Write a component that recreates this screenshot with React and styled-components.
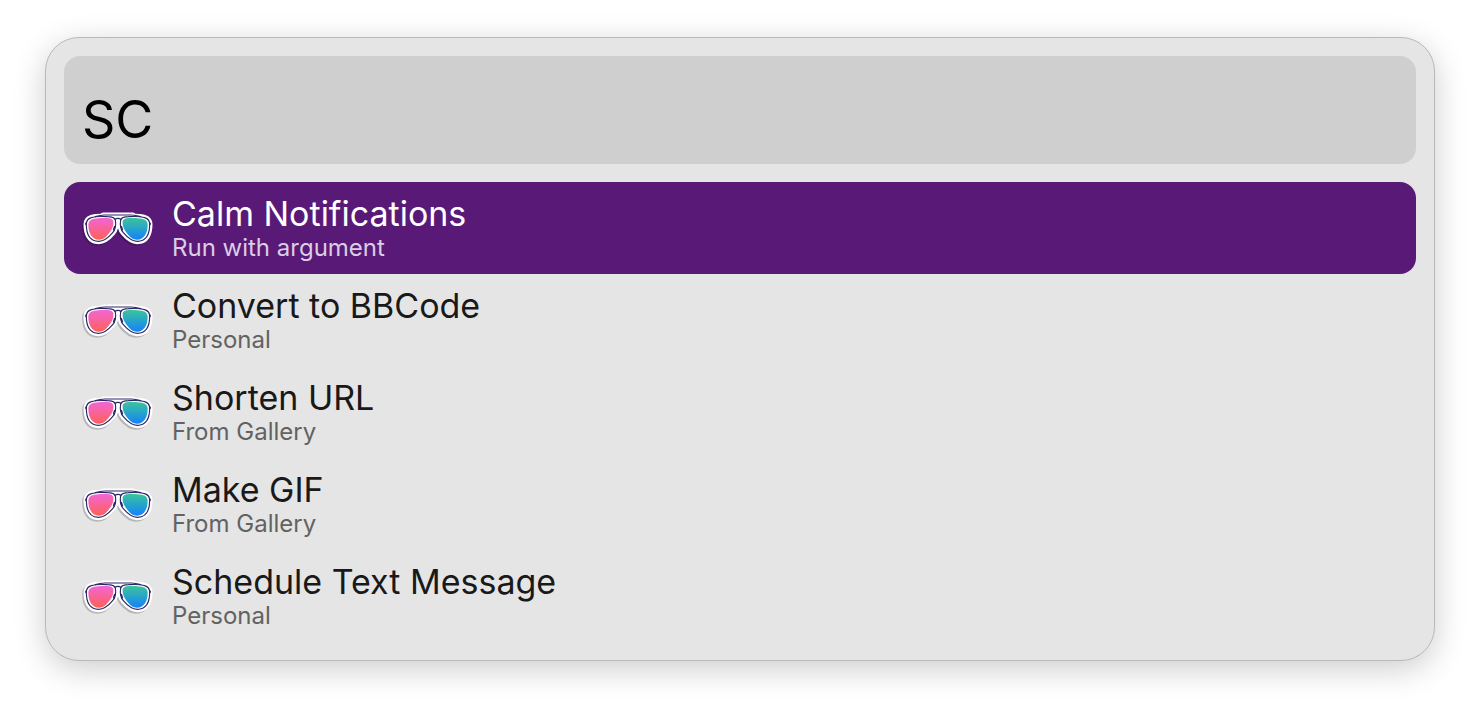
import React, { useState } from "react";
import styled, { createGlobalStyle } from "styled-components";

const GlobalStyle = createGlobalStyle`
  * { box-sizing: border-box; }
  body {
    margin: 0;
    background: #fff;
    font-family: Inter, "Liberation Sans", sans-serif;
  }
`;

const Page = styled.main`
  padding: 37px 45px 53px;
`;

const Panel = styled.section`
  display: flex;
  flex-direction: column;
  gap: 18px;
  padding: 18px;
  border: 1px solid #b9b9b9;
  border-radius: 34px;
  background: #e5e5e5;
  box-shadow: 0 8px 32px rgba(0, 0, 0, 0.2);
`;

const SearchInput = styled.input`
  width: 100%;
  height: 108px;
  padding: 18px 18px 0;
  border: 0;
  border-radius: 16px;
  outline: 0;
  background: #cfcfcf;
  color: #000;
  font: inherit;
  font-size: 52px;
`;

const Results = styled.ul`
  margin: 0;
  padding: 0;
  list-style: none;
`;

const Row = styled.button`
  display: flex;
  align-items: center;
  gap: 18px;
  width: 100%;
  height: 92px;
  padding: 0 18px;
  border: 0;
  border-radius: 16px;
  background: ${(p) => (p.$selected ? "#591a77" : "transparent")};
  color: ${(p) => (p.$selected ? "#fff" : "#191919")};
  font: inherit;
  text-align: left;
`;

const Labels = styled.span`
  display: flex;
  flex-direction: column;
  padding-bottom: 1px;
`;

const Title = styled.span`
  font-size: 34px;
  line-height: 41px;
`;

const Subtitle = styled.span`
  color: ${(p) => (p.$selected ? "#dccde3" : "#626262")};
  font-size: 24px;
  line-height: 28px;
`;

const IconSvg = styled.svg`
  flex: none;
  width: 72px;
  height: 72px;
`;

const FRAME =
  "M136 66C134 59 126 56 112 56C94 55 76 55 64 59C54 62 49 69 49 79C49 106 58 130 86 130C105 130 117 117 128 104C136 95 138 78 136 66Z";
const LENS =
  "M72 62C84 60 106 59 119 61C128 63 131 68 130 77C129 89 124 97 116 107C107 118 99 125 87 125C65 125 55 104 55 80C55 70 61 64 72 62Z";

function Glasses() {
  const mirror = "translate(288 0) scale(-1 1)";
  return (
    <IconSvg viewBox="36 -18 216 216" aria-hidden="true">
      <defs>
        <linearGradient id="pink" x1="0" y1="0" x2="0" y2="1">
          <stop offset="0" stopColor="#f266d4" />
          <stop offset="1" stopColor="#ff6058" />
        </linearGradient>
        <linearGradient id="blue" x1="0" y1="0" x2="0" y2="1">
          <stop offset="0" stopColor="#3ac49c" />
          <stop offset="1" stopColor="#1482fa" />
        </linearGradient>
      </defs>
      <g strokeLinejoin="round" strokeLinecap="round">
        <g fill="#000" stroke="#000" strokeWidth="17" opacity="0.2" transform="translate(-4 5)">
          <path d={FRAME} />
          <path d={FRAME} transform={mirror} />
          <path d="M100 52H188M130 66H158" />
        </g>
        <g fill="#fff" stroke="#fff" strokeWidth="17">
          <path d={FRAME} />
          <path d={FRAME} transform={mirror} />
          <path d="M100 52H188M130 66H158" />
        </g>
        <g fill="none" stroke="#2c2868" strokeWidth="3.5">
          <path d={FRAME} />
          <path d={FRAME} transform={mirror} />
          <path d="M76 56C88 52 94 51 104 51H184C194 51 200 52 212 56" />
          <path d="M135 65C139 60 149 60 153 65" />
          <path d="M48 76V79M240 76V79M134 86L131 95M154 86L157 95" strokeWidth="5" />
        </g>
      </g>
      <path d={LENS} fill="url(#pink)" />
      <path d={LENS} fill="url(#blue)" transform={mirror} />
    </IconSvg>
  );
}

const ITEMS = [
  { title: "Calm Notifications", subtitle: "Run with argument" },
  { title: "Convert to BBCode", subtitle: "Personal" },
  { title: "Shorten URL", subtitle: "From Gallery" },
  { title: "Make GIF", subtitle: "From Gallery" },
  { title: "Schedule Text Message", subtitle: "Personal" },
];

export default function App() {
  const [query, setQuery] = useState("SC");
  const [selected, setSelected] = useState(0);
  return (
    <Page>
      <GlobalStyle />
      <Panel>
        <SearchInput aria-label="Search" value={query} onChange={(e) => setQuery(e.target.value)} />
        <Results>
          {ITEMS.map((item, i) => (
            <li key={item.title}>
              <Row type="button" $selected={i === selected} onClick={() => setSelected(i)}>
                <Glasses />
                <Labels>
                  <Title>{item.title}</Title>
                  <Subtitle $selected={i === selected}>{item.subtitle}</Subtitle>
                </Labels>
              </Row>
            </li>
          ))}
        </Results>
      </Panel>
    </Page>
  );
}
